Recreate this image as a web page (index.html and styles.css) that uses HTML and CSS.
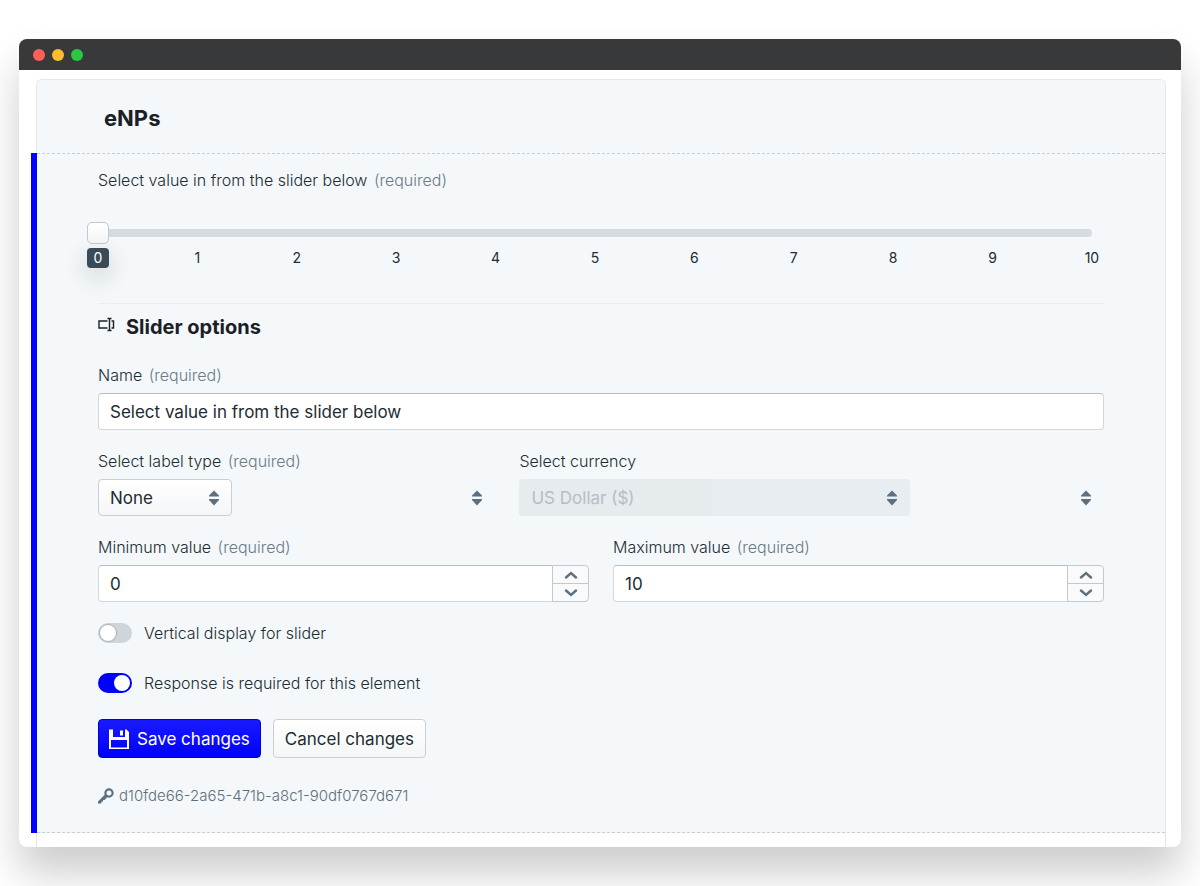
FILE: index.html
```html
<!DOCTYPE html>
<html lang="en">
<head>
<meta charset="utf-8">
<meta name="viewport" content="width=device-width, initial-scale=1">
<title>eNPs</title>
<link rel="stylesheet" href="styles.css">
</head>
<body>
<main class="window">
  <div class="titlebar">
    <span class="dot dot-close"></span>
    <span class="dot dot-minimize"></span>
    <span class="dot dot-expand"></span>
  </div>
  <div class="viewport">
    <form class="survey">
      <header class="survey-header"><h1 class="survey-title">eNPs</h1></header>
      <section class="element">
        <div class="slider">
          <label class="label" for="score">Select value in from the slider below <span class="required">(required)</span></label>
          <div class="range">
            <div class="rail"></div>
            <input class="range-input" id="score" type="range" min="0" max="10" value="0">
          </div>
          <div class="ticks">
            <span class="tick tick-current">0</span><span class="tick">1</span><span class="tick">2</span><span class="tick">3</span><span class="tick">4</span><span class="tick">5</span><span class="tick">6</span><span class="tick">7</span><span class="tick">8</span><span class="tick">9</span><span class="tick">10</span>
          </div>
        </div>

        <h2 class="options-title">
          <svg class="rename-icon" viewBox="0 0 17 16" aria-hidden="true"><path d="M9.500 4H1v7h8.500M13.500 4H15.500v7H13.500M9.500 1.500h4M9.500 13.500h4M11.500 1.500v12" fill="none" stroke="currentColor" stroke-width="1.400"/></svg>
          Slider options
        </h2>

        <div class="field">
          <label class="label" for="name">Name <span class="required">(required)</span></label>
          <input class="input" id="name" type="text" value="Select value in from the slider below">
        </div>

        <div class="row row-selects">
          <div class="field">
            <label class="label" for="label-type">Select label type <span class="required">(required)</span></label>
            <div class="select-wrap">
              <div class="select-box select-box-short">
                <select class="select" id="label-type"><option>None</option></select>
                <svg class="sort-icon" viewBox="0 0 12 16" aria-hidden="true"><path d="M6 .5 11 5.500V6.500H1V5.500ZM1 9h10v1L6 15.500 1 10Z"/></svg>
              </div>
              <svg class="sort-icon" viewBox="0 0 12 16" aria-hidden="true"><path d="M6 .5 11 5.500V6.500H1V5.500ZM1 9h10v1L6 15.500 1 10Z"/></svg>
            </div>
          </div>
          <div class="field">
            <label class="label" for="currency">Select currency</label>
            <div class="select-wrap">
              <div class="select-box select-box-long">
                <select class="select" id="currency" disabled><option>US Dollar ($)</option></select>
                <svg class="sort-icon" viewBox="0 0 12 16" aria-hidden="true"><path d="M6 .5 11 5.500V6.500H1V5.500ZM1 9h10v1L6 15.500 1 10Z"/></svg>
              </div>
              <svg class="sort-icon" viewBox="0 0 12 16" aria-hidden="true"><path d="M6 .5 11 5.500V6.500H1V5.500ZM1 9h10v1L6 15.500 1 10Z"/></svg>
            </div>
          </div>
        </div>

        <div class="row">
          <div class="field">
            <label class="label" for="min">Minimum value <span class="required">(required)</span></label>
            <div class="number">
              <input class="input number-input" id="min" type="number" value="0">
              <div class="steppers">
                <button class="step" type="button" aria-label="Increase minimum"><svg class="chevron" viewBox="0 0 14 8" aria-hidden="true"><path d="M2 6.500 7 2l5 4.500"/></svg></button>
                <button class="step" type="button" aria-label="Decrease minimum"><svg class="chevron" viewBox="0 0 14 8" aria-hidden="true"><path d="M2 1.500 7 6l5-4.500"/></svg></button>
              </div>
            </div>
          </div>
          <div class="field">
            <label class="label" for="max">Maximum value <span class="required">(required)</span></label>
            <div class="number">
              <input class="input number-input" id="max" type="number" value="10">
              <div class="steppers">
                <button class="step" type="button" aria-label="Increase maximum"><svg class="chevron" viewBox="0 0 14 8" aria-hidden="true"><path d="M2 6.500 7 2l5 4.500"/></svg></button>
                <button class="step" type="button" aria-label="Decrease maximum"><svg class="chevron" viewBox="0 0 14 8" aria-hidden="true"><path d="M2 1.500 7 6l5-4.500"/></svg></button>
              </div>
            </div>
          </div>
        </div>

        <div class="toggles">
          <label class="toggle"><input class="switch" type="checkbox">Vertical display for slider</label>
          <label class="toggle"><input class="switch" type="checkbox" checked>Response is required for this element</label>
        </div>

        <div class="actions">
          <button class="button button-primary" type="button">
            <svg class="save-icon" viewBox="0 0 20 20" aria-hidden="true"><path fill-rule="evenodd" d="M0 .5h4v7.500h12V.5h1.500L20 3v17H0ZM2 11v7.500h16V11ZM11 1.500h3v5h-3Z"/></svg>
            Save changes
          </button>
          <button class="button" type="button">Cancel changes</button>
        </div>

        <div class="element-id">
          <svg class="key-icon" viewBox="0 0 16 16" aria-hidden="true"><circle cx="11" cy="5" r="3.600" fill="none" stroke="currentColor" stroke-width="2.200"/><path d="M7.200 6.200 9.800 8.800 6.500 12H5v1.700H3.300V15.500H0V13.500Z" fill="currentColor"/></svg>
          <span>d10fde66-2a65-471b-a8c1-90df0767d671</span>
        </div>
      </section>
    </form>
  </div>
</main>
</body>
</html>
```

FILE: styles.css
```css
* {
  box-sizing: border-box;
}

body {
  margin: 0;
  padding: 39px 19px;
  background: #fff;
  color: #212b32;
  font: 15px/24px Inter, "Liberation Sans", sans-serif;
  overflow-x: hidden;
}

button,
input,
select {
  margin: 0;
  color: inherit;
  font: inherit;
}

.window {
  border-radius: 8px;
  background: #fff;
  box-shadow: 0 26px 40px rgba(0, 0, 0, 0.2);
}

.titlebar {
  display: flex;
  align-items: center;
  gap: 7px;
  height: 31px;
  padding: 0 14px;
  border-radius: 8px 8px 0 0;
  background: #38393a;
}

.dot {
  width: 12px;
  height: 12px;
  border-radius: 50%;
}

.dot-close {
  background: #ff5f57;
}

.dot-minimize {
  background: #febc2e;
}

.dot-expand {
  background: #28c840;
}

.viewport {
  padding: 9px 15px 0 17px;
}

.survey {
  padding-bottom: 14px;
  border: 1px solid #e4e7e9;
  border-bottom: 0;
  border-radius: 6px 6px 0 0;
}

.survey-header {
  padding: 22px 67px 19px;
  border-radius: 6px 6px 0 0;
  background: #f4f8fb;
}

.survey-title {
  margin: 0;
  color: #1a2026;
  font-size: 22px;
  line-height: 32px;
  font-weight: 700;
}

.element {
  margin-left: -6px;
  padding: 15px 61px 25px;
  border-left: 6px solid #00f;
  background:
    repeating-linear-gradient(90deg, #c8cfd4 0 3px, transparent 3px 5px) top / 100% 1px no-repeat,
    repeating-linear-gradient(90deg, #c8cfd4 0 3px, transparent 3px 5px) bottom / 100% 1px no-repeat,
    #f4f8fb;
}

.slider {
  padding-bottom: 35px;
  border-bottom: 1px solid #e8edf0;
}

.label {
  display: block;
  font-size: 16px;
  font-weight: 300;
}

.required {
  margin-left: 2px;
  color: #6b7a86;
}

.range {
  display: grid;
  align-items: center;
  margin: 30px 12px 4px 0;
}

.rail {
  grid-area: 1 / 1;
  height: 8px;
  border-radius: 4px;
  background: #d5dbe0;
}

.range-input {
  grid-area: 1 / 1;
  height: 22px;
  margin: 0 -11px;
  background: none;
  appearance: none;
}

.range-input::-webkit-slider-thumb {
  width: 22px;
  height: 22px;
  border: 1px solid #c3c8cc;
  border-radius: 5px;
  background: linear-gradient(#fff, #f4f6f7);
  appearance: none;
}

.ticks {
  display: flex;
  justify-content: space-between;
  margin: 0 1px 0 -11px;
  font-size: 14px;
  line-height: 20px;
}

.tick {
  width: 22px;
  text-align: center;
}

.tick-current {
  border-radius: 4px;
  background: #394b59;
  box-shadow: 0 8px 24px rgba(16, 22, 26, 0.2);
  color: #fff;
}

.options-title {
  display: flex;
  align-items: center;
  gap: 11px;
  margin: 11px 0 24px;
  color: #1a2026;
  font-size: 20px;
  line-height: 24px;
  font-weight: 700;
}

.rename-icon {
  width: 17px;
  height: 16px;
  margin-bottom: 4px;
}

.field {
  display: flex;
  flex-direction: column;
  gap: 6px;
  margin-bottom: 19px;
}

.row {
  display: grid;
  grid-template-columns: 1fr 1fr;
  column-gap: 24px;
}

.row-selects {
  grid-template-columns: 17fr 25fr;
}

.input {
  width: 100%;
  min-width: 0;
  height: 37px;
  padding: 0 11px;
  border: 1px solid #d3d7da;
  border-top-color: #b9bec2;
  border-radius: 4px;
  background: #fff;
  font-size: 17px;
}

.select-wrap {
  display: flex;
  align-items: center;
  justify-content: space-between;
  padding-right: 12px;
}

.select-box {
  display: grid;
  align-items: center;
}

.select-box-short {
  width: 134px;
}

.select-box-long {
  width: calc(66.67% + 9px);
}

.select {
  grid-area: 1 / 1;
  width: 100%;
  height: 37px;
  padding: 0 30px 0 11px;
  border: 1px solid #cbcfd2;
  border-radius: 4px;
  background: linear-gradient(#fff, #f4f6f7);
  font-size: 17px;
  appearance: none;
}

.select:disabled {
  border-color: transparent;
  background: linear-gradient(90deg, #e6ebee 49%, #e8edf1 49%) border-box;
  color: #b4bec6;
  opacity: 1;
}

.sort-icon {
  width: 12px;
  height: 16px;
  fill: #5c7080;
}

.select-box .sort-icon {
  grid-area: 1 / 1;
  justify-self: end;
  margin-right: 12px;
  pointer-events: none;
}

.number {
  display: flex;
}

.number-input {
  flex: 1;
  border-radius: 4px 0 0 4px;
  appearance: textfield;
}

.number-input::-webkit-inner-spin-button {
  display: none;
}

.steppers {
  display: flex;
  flex-direction: column;
  width: 37px;
  margin-left: -1px;
  border: 1px solid #c4c9cd;
  border-radius: 0 4px 4px 0;
  background: #f8fafb;
}

.step {
  display: flex;
  flex: 1;
  align-items: center;
  justify-content: center;
  padding: 0;
  border: 0;
  background: none;
}

.step + .step {
  border-top: 1px solid #c4c9cd;
}

.chevron {
  width: 14px;
  height: 8px;
  fill: none;
  stroke: #5c7080;
  stroke-width: 2.4;
  stroke-linecap: round;
}

.toggles {
  display: flex;
  flex-direction: column;
  align-items: flex-start;
  gap: 26px;
}

.toggle {
  display: flex;
  align-items: center;
  gap: 12px;
  font-size: 16px;
  font-weight: 300;
}

.switch {
  width: 34px;
  height: 20px;
  padding: 2px;
  border-radius: 10px;
  background: #ced6dc;
  appearance: none;
}

.switch::before {
  display: block;
  width: 16px;
  height: 16px;
  border-radius: 50%;
  background: #fff;
  box-shadow: 0 0 1px 1px rgba(16, 22, 26, 0.2);
  content: "";
}

.switch:checked {
  background: #00f;
}

.switch:checked::before {
  margin-left: auto;
  box-shadow: none;
}

.actions {
  display: flex;
  gap: 12px;
  margin: 24px 0 26px;
}

.button {
  display: flex;
  align-items: center;
  gap: 8px;
  height: 39px;
  padding: 0 11px;
  border: 1px solid #cbcfd2;
  border-radius: 4px;
  background: linear-gradient(#fff, #f4f6f7);
  font-size: 17px;
}

.button-primary {
  padding: 0 10px;
  border-color: #0000d0;
  background: linear-gradient(#1a1aff, #00f);
  color: #fff;
}

.save-icon {
  width: 20px;
  height: 20px;
  fill: #fff;
}

.element-id {
  display: flex;
  align-items: center;
  gap: 5px;
  color: #5f6f7c;
  font-weight: 300;
}

.key-icon {
  width: 16px;
  height: 16px;
  color: #5c7080;
}
```
